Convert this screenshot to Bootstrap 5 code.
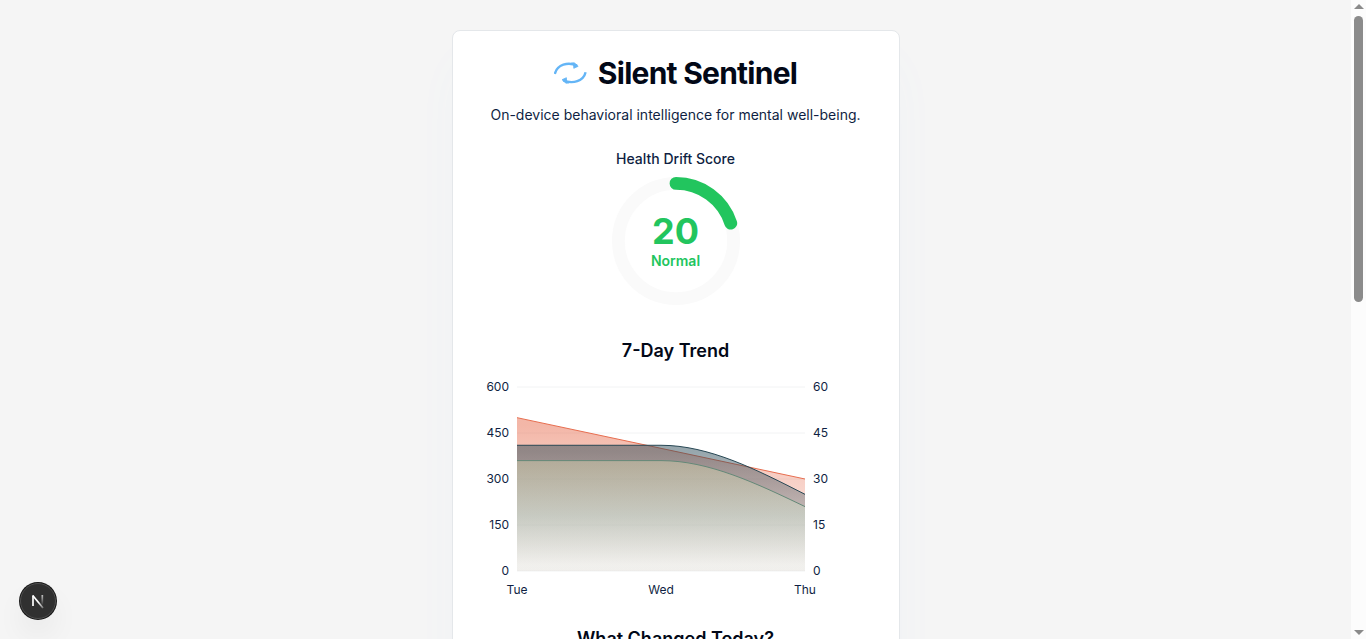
<!DOCTYPE html>
<html lang="en">
<head>
    <meta charset="UTF-8">
    <meta name="viewport" content="width=device-width, initial-scale=1.0">
    <title>Silent Sentinel</title>
    <link href="https://cdn.jsdelivr.net/npm/bootstrap@5.3.0/dist/css/bootstrap.min.css" rel="stylesheet">
    <style>
        body { font-family: Inter, sans-serif; background: #f5f5f5; color: #0f1f43; }
        .page-main { min-width: 0; padding-top: 30px; }
        .sentinel-card { width: 448px; height: 900px; border: 1px solid #e4e7ea; border-radius: 8px; padding: 24px 24px 0; box-shadow: 0 25px 50px -12px rgba(100, 181, 246, .05); }
        .app-title { font-size: 30px; line-height: 36px; font-weight: 700; letter-spacing: -.75px; color: #020817; }
        .app-sub { font-size: 14px; line-height: 20px; margin-top: 14px; }
        .score-label { font-size: 14px; line-height: 20px; font-weight: 500; margin-top: 24px; }
        .ring-box { width: 128px; height: 128px; margin-top: 8px; }
        .score-num { font-size: 36px; line-height: 40px; font-weight: 700; color: #22c55e; }
        .score-state { font-size: 14px; line-height: 20px; font-weight: 600; color: #22c55e; }
        .block-title { font-size: 18px; line-height: 28px; font-weight: 600; color: #020817; }
        .trend-title { margin-top: 32px; }
        .trend-chart { width: 386px; height: 240px; font-size: 12px; margin-top: 5px; }
        .changes-title { margin-top: 15px; }
        .scroll-track { width: 15px; background: #fcfcfc; padding: 4px 0; }
        .scroll-thumb { width: 9px; height: 286px; border-radius: 5px; background: #8b8b8b; margin-top: 7px; }
        .dev-badge { left: 19px; bottom: 19px; width: 38px; height: 38px; border-radius: 50%; box-shadow: 0 16px 32px -8px rgba(0, 0, 0, .14); }
    </style>
    <script src="https://cdn.jsdelivr.net/npm/bootstrap@5.3.0/dist/js/bootstrap.bundle.min.js"></script>
</head>

<body class="overflow-hidden">
    <div class="d-flex vh-100 overflow-hidden">
        <main class="page-main flex-grow-1 d-flex justify-content-center align-items-start">
            <div class="sentinel-card bg-white d-flex flex-column align-items-center flex-shrink-0">
                <div class="d-flex align-items-center">
                    <svg class="me-2" width="36" height="32" viewBox="0 0 36 32" fill="none" stroke="#64b5f6" stroke-width="2.400">
                        <path d="M.8 17C3 7.500 14 4.500 23 8.600M31.600 15.200C29.500 24 19 27.500 9.300 23.400"/>
                        <path d="M17.500 6L20.200 5.800L24.200 9.300L19.800 11.300L19.600 8ZM14.800 26L12 26.200L8 22.700L12.400 20.700L12.600 24Z" fill="#64b5f6" stroke-width=".8" stroke-linejoin="round"/>
                    </svg>
                    <h1 class="app-title mb-0">Silent Sentinel</h1>
                </div>
                <p class="app-sub mb-0">On-device behavioral intelligence for mental well-being.</p>
                <div class="score-label">Health Drift Score</div>
                <div class="ring-box position-relative">
                    <svg class="d-block" width="128" height="128" viewBox="0 0 100 100" fill="none" stroke-width="10">
                        <circle cx="50" cy="50" r="45" stroke="#fafafa"/>
                        <path d="M50 5A45 45 0 0 1 92.798 36.094" stroke="#22c55e" stroke-linecap="round"/>
                    </svg>
                    <div class="position-absolute top-0 start-0 w-100 h-100 d-flex flex-column align-items-center justify-content-center">
                        <span class="score-num">20</span>
                        <span class="score-state">Normal</span>
                    </div>
                </div>
                <h2 class="block-title trend-title mb-0">7-Day Trend</h2>
                <!-- plot area runs x 34..322, y 17..201 -->
                <svg class="trend-chart" viewBox="0 0 386 240" fill="#0f1f43">
                    <defs>
                        <linearGradient id="fillScreen" x1="0" y1="0" x2="0" y2="1">
                            <stop offset="5%" stop-color="#e76e50" stop-opacity=".5"/>
                            <stop offset="95%" stop-color="#e76e50" stop-opacity=".06"/>
                        </linearGradient>
                        <linearGradient id="fillSleep" x1="0" y1="0" x2="0" y2="1">
                            <stop offset="5%" stop-color="#274754" stop-opacity=".48"/>
                            <stop offset="95%" stop-color="#274754" stop-opacity=".06"/>
                        </linearGradient>
                        <linearGradient id="fillSteps" x1="0" y1="0" x2="0" y2="1">
                            <stop offset="5%" stop-color="#d6d6ae" stop-opacity=".42"/>
                            <stop offset="50%" stop-color="#c8dccb" stop-opacity=".46"/>
                            <stop offset="95%" stop-color="#f1f5ef" stop-opacity=".4"/>
                        </linearGradient>
                    </defs>
                    <path d="M34 17H322M34 63H322M34 109H322M34 155H322M34 201H322" stroke="#f2f3f4"/>
                    <path d="M34 47.670L178 78.330L322 109V201H34Z" fill="url(#fillScreen)"/>
                    <path d="M34 47.670L178 78.330L322 109" fill="none" stroke="#e76e50"/>
                    <path d="M34 75.270H178C226 75.270 274 99.800 322 124.330V201H34Z" fill="url(#fillSleep)"/>
                    <path d="M34 75.270H178C226 75.270 274 99.800 322 124.330" fill="none" stroke="#274754"/>
                    <path d="M34 90.600H178C226 90.600 274 113.600 322 136.600V201H34Z" fill="url(#fillSteps)"/>
                    <path d="M34 90.600H178C226 90.600 274 113.600 322 136.600" fill="none" stroke="#648878"/>
                    <g text-anchor="end">
                        <text x="26" y="21">600</text>
                        <text x="26" y="67">450</text>
                        <text x="26" y="113">300</text>
                        <text x="26" y="159">150</text>
                        <text x="26" y="205">0</text>
                    </g>
                    <g>
                        <text x="330" y="21">60</text>
                        <text x="330" y="67">45</text>
                        <text x="330" y="113">30</text>
                        <text x="330" y="159">15</text>
                        <text x="330" y="205">0</text>
                    </g>
                    <g text-anchor="middle">
                        <text x="34" y="224">Tue</text>
                        <text x="178" y="224">Wed</text>
                        <text x="322" y="224">Thu</text>
                    </g>
                </svg>
                <h2 class="block-title changes-title mb-0">What Changed Today?</h2>
            </div>
        </main>
        <div class="scroll-track d-flex flex-column align-items-center">
            <svg width="10" height="5"><path d="M0 5L5 0L10 5Z" fill="#8b8b8b"/></svg>
            <div class="scroll-thumb"></div>
            <svg class="mt-auto" width="10" height="5"><path d="M0 0L5 5L10 0Z" fill="#8b8b8b"/></svg>
        </div>
    </div>
    <div class="dev-badge position-fixed">
        <svg class="d-block" width="38" height="38" viewBox="0 0 38 38" fill="none">
            <defs>
                <linearGradient id="fadeDiag" x1="20" y1="20" x2="25" y2="27" gradientUnits="userSpaceOnUse">
                    <stop stop-color="#fff"/>
                    <stop offset="1" stop-color="#fff" stop-opacity=".2"/>
                </linearGradient>
                <linearGradient id="fadeStem" x1="0" y1="13" x2="0" y2="22" gradientUnits="userSpaceOnUse">
                    <stop stop-color="#fff" stop-opacity=".7"/>
                    <stop offset="1" stop-color="#fff" stop-opacity=".1"/>
                </linearGradient>
            </defs>
            <circle cx="19" cy="19" r="19" fill="#171717"/>
            <circle cx="19" cy="19" r="17.500" fill="#303030" stroke="#505050"/>
            <path d="M14 24V13.500" stroke="#fff" stroke-width="1.700"/>
            <path d="M13.800 13.500L24 26" stroke="url(#fadeDiag)" stroke-width="1.700"/>
            <path d="M23.300 13V22.500" stroke="url(#fadeStem)" stroke-width="1.700"/>
        </svg>
    </div>
</body>
</html>
